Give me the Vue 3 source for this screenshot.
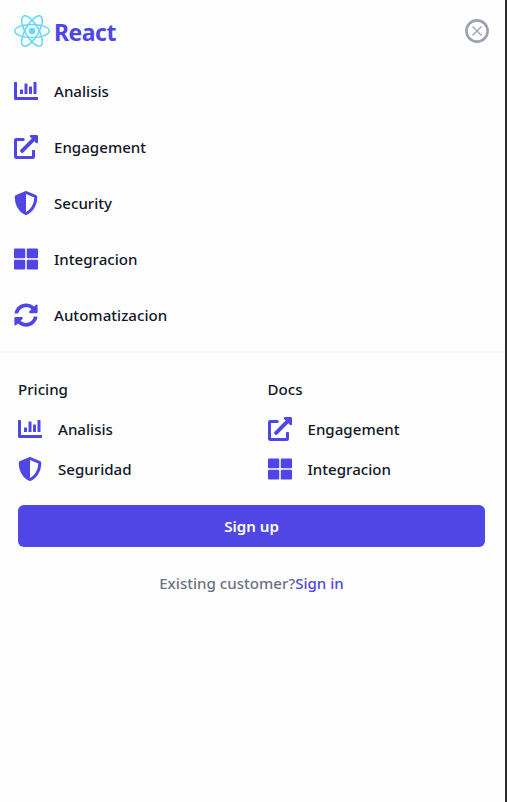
<script setup>
const icons = {
  chart: 'M64 400V76.8C64 70.4 57.6 64 51.2 64H12.8C6.4 64 0 70.4 0 76.8V416a32 32 0 0 0 32 32h467.200c6.400 0 12.800-6.400 12.800-12.800V396.800c0-6.400-6.400-12.800-12.800-12.800H64zM140.800 224h38.400q12.800 0 12.800 12.800v70.400q0 12.800-12.800 12.800h-38.400q-12.800 0-12.800-12.800v-70.400q0-12.800 12.800-12.800zM236.800 96h38.400q12.800 0 12.800 12.800v198.400q0 12.800-12.800 12.800h-38.400q-12.800 0-12.800-12.800v-198.400q0-12.800 12.800-12.800zM332.800 160h38.400q12.800 0 12.800 12.800v134.400q0 12.800-12.800 12.800h-38.400q-12.800 0-12.800-12.800v-134.400q0-12.800 12.800-12.800zM428.800 64h38.400q12.800 0 12.800 12.800v230.400q0 12.800-12.800 12.800h-38.400q-12.800 0-12.800-12.800v-230.400q0-12.800 12.800-12.800z',
  external: 'M432,320H400a16,16,0,0,0-16,16V448H64V128H208a16,16,0,0,0,16-16V80a16,16,0,0,0-16-16H48A48,48,0,0,0,0,112V464a48,48,0,0,0,48,48H400a48,48,0,0,0,48-48V336A16,16,0,0,0,432,320ZM488,0h-128c-21.37,0-32.05,25.91-17,41l35.73,35.73L135,320.37a24,24,0,0,0,0,34L157.67,377a24,24,0,0,0,34,0L435.28,133.32,471,169c15,15,41,4.5,41-17V24A24,24,0,0,0,488,0Z',
  shield: 'M466.5 83.7l-192-80a48.15 48.15 0 0 0-36.9 0l-192 80C27.7 91.1 16 108.6 16 128c0 198.5 114.5 335.7 221.5 380.3 11.8 4.9 25.1 4.9 36.9 0C360.1 472.6 496 349.3 496 128c0-19.4-11.7-36.9-29.5-44.3zM256.1 446.3l-.1-381 175.9 73.3c-3.3 151.4-82.1 261.1-175.8 307.7z',
  grid: 'M296 32h192c13.255 0 24 10.745 24 24v160c0 13.255-10.745 24-24 24H296c-13.255 0-24-10.745-24-24V56c0-13.255 10.745-24 24-24zm-80 0H24C10.745 32 0 42.745 0 56v160c0 13.255 10.745 24 24 24h192c13.255 0 24-10.745 24-24V56c0-13.255-10.745-24-24-24zM0 296v160c0 13.255 10.745 24 24 24h192c13.255 0 24-10.745 24-24V296c0-13.255-10.745-24-24-24H24c-13.255 0-24 10.745-24 24zm296 184h192c13.255 0 24-10.745 24-24V296c0-13.255-10.745-24-24-24H296c-13.255 0-24 10.745-24 24v160c0 13.255 10.745 24 24 24z',
  sync: 'M370.72 133.28C339.458 104.008 298.888 87.962 255.848 88c-77.458.068-144.328 53.178-162.791 126.85-1.344 5.363-6.122 9.15-11.651 9.15H24.103c-7.498 0-13.194-6.807-11.807-14.176C33.933 94.924 134.813 8 256 8c66.448 0 126.791 26.136 171.315 68.685L463.03 40.97C478.149 25.851 504 36.559 504 57.941V192c0 13.255-10.745 24-24 24H345.941c-21.382 0-32.09-25.851-16.971-40.971l41.75-41.749zM32 296h134.059c21.382 0 32.09 25.851 16.971 40.971l-41.75 41.75c31.262 29.273 71.835 45.319 114.876 45.28 77.418-.07 144.315-53.144 162.787-126.849 1.344-5.363 6.122-9.15 11.651-9.15h57.304c7.498 0 13.194 6.807 11.807 14.176C478.067 417.076 377.187 504 256 504c-66.448 0-126.791-26.136-171.315-68.685L48.97 471.03C33.851 486.149 8 475.441 8 454.059V320c0-13.255 10.745-24 24-24z',
}

const primary = [
  { label: 'Analisis', icon: 'chart' },
  { label: 'Engagement', icon: 'external' },
  { label: 'Security', icon: 'shield' },
  { label: 'Integracion', icon: 'grid' },
  { label: 'Automatizacion', icon: 'sync' },
]

const groups = [
  {
    title: 'Pricing',
    items: [
      { label: 'Analisis', icon: 'chart' },
      { label: 'Seguridad', icon: 'shield' },
    ],
  },
  {
    title: 'Docs',
    items: [
      { label: 'Engagement', icon: 'external' },
      { label: 'Integracion', icon: 'grid' },
    ],
  },
]
</script>

<template>
  <div class="menu">
    <header class="header">
      <div class="brand">
        <svg class="logo" viewBox="-11.5 -10.232 23 20.464" fill="none" stroke="#61dafb">
          <circle r="2.05" fill="#61dafb" stroke="none" />
          <ellipse rx="11" ry="4.2" />
          <ellipse rx="11" ry="4.2" transform="rotate(60)" />
          <ellipse rx="11" ry="4.2" transform="rotate(120)" />
        </svg>
        <span class="brand-name">React</span>
      </div>
      <button class="close" type="button" aria-label="Close">
        <svg viewBox="0 0 24 24" fill="none" stroke="currentColor">
          <circle cx="12" cy="12" r="10.600" stroke-width="2.600" />
          <path d="M7.500 7.500l9 9M16.500 7.500l-9 9" stroke-width="1.300" />
        </svg>
      </button>
    </header>

    <nav class="primary">
      <a v-for="item in primary" :key="item.label" class="link">
        <svg class="icon" viewBox="0 0 512 512"><path :d="icons[item.icon]" /></svg>
        <span>{{ item.label }}</span>
      </a>
    </nav>

    <section class="secondary">
      <div class="groups">
        <div v-for="group in groups" :key="group.title" class="group">
          <span class="title">{{ group.title }}</span>
          <a v-for="item in group.items" :key="item.label" class="link">
            <svg class="icon" viewBox="0 0 512 512"><path :d="icons[item.icon]" /></svg>
            <span>{{ item.label }}</span>
          </a>
        </div>
      </div>
      <button class="signup" type="button">Sign up</button>
      <p class="existing">Existing customer?<a class="signin">Sign in</a></p>
    </section>
  </div>
</template>

<style>
body {
  margin: 0;
  background: #fff;
}
</style>

<style scoped>
.menu {
  box-sizing: border-box;
  height: 802px;
  border-right: 2px solid #2b2b2d;
  background: #fefefe;
  color: #111827;
  font: 500 15.1px/24px "Noto Sans", "Open Sans", sans-serif;
}
.header {
  display: flex;
  align-items: center;
  justify-content: space-between;
  height: 62px;
  padding: 0 16px 0 14px;
}
.brand {
  display: flex;
  align-items: center;
  gap: 4px;
}
.logo {
  width: 36px;
  height: 32px;
}
.brand-name {
  padding-top: 2px;
  color: #4f46e5;
  font-size: 23px;
  font-weight: 700;
  letter-spacing: -0.5px;
  line-height: 32px;
}
.close {
  width: 24px;
  height: 24px;
  padding: 0;
  border: 0;
  background: none;
  color: #9ca3af;
}
.close svg {
  display: block;
}
.primary {
  display: grid;
  gap: 32px;
  padding: 17px 14px 24px;
}
.link {
  display: flex;
  align-items: center;
  gap: 16px;
}
.icon {
  width: 24px;
  height: 24px;
  fill: #4f46e5;
}
.secondary {
  padding: 24px 20px 0 18px;
  border-top: 2px solid #f9fafb;
}
.groups {
  display: grid;
  grid-template-columns: 1fr 1fr;
  column-gap: 32px;
}
.group {
  display: grid;
  gap: 16px;
}
.signup {
  display: block;
  width: 100%;
  height: 42px;
  margin-top: 24px;
  padding: 0;
  border: 0;
  border-radius: 6px;
  background: #4f46e5;
  color: #fff;
  font: inherit;
  font-weight: 600;
}
.existing {
  margin: 24px 0 0;
  color: #6b7280;
  text-align: center;
}
.signin {
  color: #4f46e5;
}
</style>
